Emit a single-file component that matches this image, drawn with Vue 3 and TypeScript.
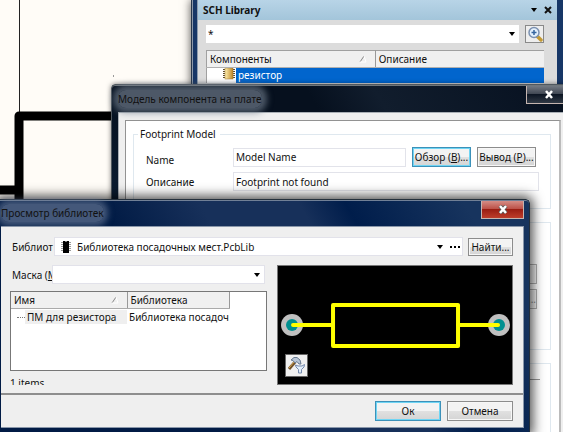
<script setup lang="ts">
import { ref } from 'vue'

interface Row {
  name: string
  library: string
}

const filter = ref('*')
const modelName = ref('Model Name')
const description = ref('Footprint not found')
const library = ref('Библиотека посадочных мест.PcbLib')
const mask = ref('')
const rows: Row[] = [{ name: 'ПМ для резистора', library: 'Библиотека посадоч' }]
</script>

<template>
  <main class="desktop">
    <svg class="sheet" width="120" height="210" aria-hidden="true">
      <path d="M19.5 0V114" stroke="#222" fill="none" />
      <path d="M120 116H19V210M0 190H19" stroke="#000" stroke-width="9" stroke-linejoin="round" fill="none" />
      <rect x="113" y="75" width="1" height="2" fill="#999" />
    </svg>

    <section class="window sch">
      <header class="panel-title">
        <h2>SCH Library</h2>
        <button class="flat" aria-label="Menu"><svg width="8" height="8"><path d="M1 2H7L4 6Z" /></svg></button>
        <button class="flat" aria-label="Close"><svg width="8" height="8"><path d="M1 1L7 7M7 1L1 7" stroke="#111" stroke-width="2" /></svg></button>
      </header>
      <div class="sch-body">
        <div class="sch-search">
          <div class="combo">
            <select v-model="filter" aria-label="Filter"><option>*</option></select>
            <svg class="arrow" width="8" height="8"><path d="M1 2H7L4 6Z" /></svg>
          </div>
          <button class="zoom" aria-label="Zoom">
            <svg width="16" height="16" viewBox="0 0 16 16">
              <path d="M10 10L14 14" stroke="#c39a35" stroke-width="3.5" stroke-linecap="round" />
              <circle cx="7" cy="6.500" r="5" fill="#e4f1fd" stroke="#7b91b1" stroke-width="1.500" />
              <path d="M4.500 6.500H9.500M7 4V9" stroke="#35659f" stroke-width="1.500" />
            </svg>
          </button>
        </div>
        <table class="components">
          <thead>
            <tr>
              <th><div class="head">Компоненты<svg width="8" height="8"><path d="M1 7L5 1" stroke="#888" /><path d="M5 1L7 7H1" stroke="#fff" fill="none" /></svg></div></th>
              <th>Описание</th>
            </tr>
          </thead>
          <tbody>
            <tr>
              <td colspan="2">
                <div class="component">
                  <span class="component-icon">
                    <svg width="12" height="12" viewBox="0 0 12 12">
                      <defs><linearGradient id="gold"><stop stop-color="#fff0b0" /><stop offset="1" stop-color="#bd8526" /></linearGradient></defs>
                      <path d="M0 1.500H12M0 3.500H12M0 5.500H12M0 7.500H12M0 9.500H12" stroke="#5d4b2b" />
                      <rect x="2" y="0" width="8" height="11" fill="url(#gold)" stroke="#a07a32" stroke-width=".5" />
                    </svg>
                  </span>
                  <span class="component-name">резистор</span>
                </div>
              </td>
            </tr>
          </tbody>
        </table>
      </div>
    </section>

    <section class="window model">
      <header class="caption"><h2>Модель компонента на плате</h2></header>
      <button class="close dark" aria-label="Закрыть">
        <svg width="10" height="9" viewBox="0 0 10 9"><path d="M2 1L8 8M8 1L2 8" stroke="#fff" stroke-width="2.500" /></svg>
      </button>
      <div class="model-client">
        <div class="model-page">
          <fieldset class="footprint">
            <legend>Footprint Model</legend>
            <div class="field name-field">
              <label for="model-name">Name</label>
              <input id="model-name" v-model="modelName">
              <button class="btn focus">Обзор (<u>В</u>)...</button>
              <button class="btn">Вывод (<u>Р</u>)...</button>
            </div>
            <div class="field">
              <label for="model-desc">Описание</label>
              <input id="model-desc" v-model="description">
            </div>
          </fieldset>
          <fieldset class="library-group">
            <button class="btn wide" aria-label="Выбрать"></button>
            <button class="btn">...</button>
          </fieldset>
          <fieldset class="selected-group"><hr></fieldset>
        </div>
      </div>
    </section>

    <section class="window browse">
      <header class="caption"><h2>Просмотр библиотек</h2></header>
      <button class="close red" aria-label="Закрыть">
        <svg width="10" height="9" viewBox="0 0 10 9"><path d="M2 1L8 8M8 1L2 8" stroke="#555" stroke-width="4" /><path d="M2 1L8 8M8 1L2 8" stroke="#fff" stroke-width="2.500" /></svg>
      </button>
      <div class="browse-client">
        <div class="browse-main">
          <div class="library-line">
            <label for="library">Библиот</label>
            <div class="combo library-combo">
              <svg class="chip" width="10" height="12" viewBox="0 0 10 12">
                <path d="M0 1.500H10M0 3.500H10M0 5.500H10M0 7.500H10M0 9.500H10" stroke="#999" />
                <path d="M2 0H4L5 1L6 0H8V12H2Z" />
              </svg>
              <select id="library" v-model="library"><option>Библиотека посадочных мест.PcbLib</option></select>
              <svg class="arrow" width="8" height="8"><path d="M1 2H7L4 6Z" /></svg>
              <button class="flat" aria-label="Библиотеки"><svg width="10" height="4"><path d="M0 1H2V3H0ZM4 1H6V3H4ZM8 1H10V3H8Z" /></svg></button>
            </div>
            <button class="btn find">Найти...</button>
          </div>
          <div class="columns">
            <div class="left">
              <div class="mask-line">
                <label for="mask">Маска (<u>М</u></label>
                <div class="combo">
                  <select id="mask" v-model="mask"><option></option></select>
                  <svg class="arrow" width="8" height="8"><path d="M1 2H7L4 6Z" /></svg>
                </div>
              </div>
              <div class="list">
                <table>
                  <thead>
                    <tr>
                      <th><div class="head">Имя<svg width="8" height="8"><path d="M1 7L5 1" stroke="#888" /><path d="M5 1L7 7H1" stroke="#fff" fill="none" /></svg></div></th>
                      <th>Библиотека</th>
                    </tr>
                  </thead>
                  <tbody>
                    <tr v-for="row in rows" :key="row.name">
                      <td><div class="tree"><span>{{ row.name }}</span></div></td>
                      <td>{{ row.library }}</td>
                    </tr>
                  </tbody>
                </table>
              </div>
              <p class="count">{{ rows.length }} items</p>
            </div>
            <div class="preview">
              <svg class="board" viewBox="0 0 234 118" role="img" aria-label="Посадочное место">
                <g fill="#c0c0c0"><circle cx="14" cy="59" r="11" /><circle cx="221" cy="59" r="11" /></g>
                <g fill="#009090"><circle cx="14" cy="59" r="6" /><circle cx="221" cy="59" r="6" /></g>
                <g fill="none" stroke="#ff0" stroke-width="4" stroke-linecap="round" stroke-linejoin="round">
                  <path d="M15 59H55M180 59H220" /><rect x="55" y="39" width="125" height="41" />
                </g>
              </svg>
              <button class="tools" aria-label="Настройка">
                <svg width="19" height="19" viewBox="0 0 19 19">
                  <path d="M2 13L8 6" stroke="#6f5028" stroke-width="3" />
                  <path d="M2 12L7 6" stroke="#d7a957" stroke-width="1" />
                  <path d="M4 4L7 1.500H10L13 4L14 8L12 8L10 5.500L8 7L6 4.500Z" fill="#b9c6d6" stroke="#667991" />
                  <path d="M8.500 9L11 10H15L17.500 8.500L17 11L14.500 13.500V17H11.500V13.500L9 11Z" fill="#e3effa" stroke="#7489ad" />
                </svg>
              </button>
            </div>
          </div>
        </div>
        <footer>
          <button class="btn focus">Ок</button>
          <button class="btn">Отмена</button>
        </footer>
      </div>
    </section>
  </main>
</template>

<style>
body { margin: 0; }
</style>

<style scoped>
* { box-sizing: border-box; }
.desktop {
  position: relative;
  height: 100vh;
  overflow: hidden;
  background: #fffcf7;
  color: #111;
  font: 10px/16px "Noto Sans", "Open Sans", sans-serif;
}
button, input, select { font: inherit; color: inherit; margin: 0; padding: 0; outline: 0; }
h2, p { margin: 0; font-size: 10px; font-weight: 400; }
svg { display: block; flex: none; }
.sheet { position: absolute; left: 0; top: 0; }
.window { position: absolute; }
.flat { border: 0; background: none; }

.sch {
  left: 191px;
  right: -1px;
  top: 0;
  bottom: 0;
  padding: 0 7px;
  background: linear-gradient(90deg, #26364c 0 1px, #8c99aa 1px 2px, #173767 2px 6px, #8e9daf 6px 7px, #173767 7px);
  box-shadow: 0 0 9px rgba(0, 0, 0, .7);
}
.panel-title {
  display: flex;
  align-items: center;
  gap: 6px;
  height: 20px;
  padding: 0 5px;
  background: linear-gradient(#b8d4e7, #a3c5da);
}
.panel-title h2 { flex: 1; font-weight: 700; }
.sch-body { height: 100%; padding: 5px 13px 0 8px; background: #dcdcdc; }
.sch-search { display: flex; gap: 6px; }
.combo { position: relative; display: flex; flex: 1; align-items: center; height: 18px; background: #fff; }
.combo select { flex: 1; width: 100%; min-width: 0; height: 100%; appearance: none; border: 0; background: none; }
.sch .combo select { padding-left: 2px; }
.arrow { position: absolute; right: 3px; pointer-events: none; }
.zoom { display: grid; place-items: center; width: 19px; height: 18px; border: 1px solid #898989; background: #eee; }
table { border-collapse: collapse; border-spacing: 0; table-layout: fixed; }
th, td { padding: 0; text-align: left; font-weight: 400; white-space: nowrap; }
.components { width: 100%; margin-top: 7px; border-top: 1px solid #a0a0a0; border-left: 1px solid #a0a0a0; background: #fff; }
.components th { height: 17px; padding-left: 3px; background: #f0f0f0; border-bottom: 1px solid #b0b0b0; }
.components th + th { border-left: 1px solid #999; }
.head { display: flex; align-items: center; justify-content: space-between; padding-right: 8px; }
.component { display: flex; height: 15px; line-height: 15px; }
.component-icon { display: flex; width: 29px; padding-left: 16px; }
.component-name { flex: 1; padding-left: 2px; background: #0165cd; color: #fff; }

.model {
  left: 111px;
  right: -11px;
  top: 84px;
  bottom: -20px;
  padding: 0 7px 7px 6px;
  border-radius: 4px 0 0 0;
  border: 1px solid #50585f;
  background: linear-gradient(60deg, #0b2038 0 18%, #06101e 32% 60%, #111d2d 70%, #06101f);
  box-shadow: 0 0 5px rgba(0, 0, 0, .5), inset 0 1px #70777c;
}
.caption { display: flex; align-items: center; height: 27px; }
.caption h2 { line-height: 18px; border-radius: 8px; }
.model .caption h2 { background: rgba(115, 127, 143, .65); box-shadow: 0 0 6px 5px rgba(115, 127, 143, .65); }
.close {
  position: absolute;
  top: 1px;
  display: grid;
  place-items: center;
  height: 18px;
  border: 1px solid #c5b5b0;
  border-top: 0;
}
.dark { right: 0; width: 47px; padding-right: 2px; background: linear-gradient(#737982, #424955 45%, #0d1624 50%, #303945); }
.model-client { height: calc(100% - 27px); padding: 7px 4px 0 6px; border: 1px solid #a9afb5; background: #efefef; }
.model-page { height: 100%; padding: 5px 8px 0 7px; border: 1px solid #929292; border-right: 2px solid #bbb; background: #fff; }
fieldset { min-width: 0; margin: 0; border: 1px solid #dfe8ef; }
.footprint { height: 83px; padding: 5px 11px 0 12px; }
legend { margin-left: -8px; padding: 0 4px 0 2px; }
.field { display: flex; align-items: center; }
.field label { flex: 0 0 87px; }
.field input { flex: 1; width: 0; min-width: 0; height: 19px; padding: 0 2px; border: 1px solid #e2e3ea; }
.name-field { margin-bottom: 5px; margin-right: 3px; }
.name-field label { padding-top: 6px; line-height: 14px; }
.btn {
  flex: none;
  height: 20px;
  border: 1px solid #8c8c8c;
  background: linear-gradient(#f3f3f3 0 48%, #e1e1e1 50%, #d4d4d4);
  box-shadow: inset 0 0 0 1px #f7f7f7;
  line-height: 16px;
  white-space: nowrap;
}
.btn.focus { border-color: #3c91b9; box-shadow: inset 0 0 0 1px #6fd5f4; }
.name-field .btn { width: 59px; margin-left: 6px; }
.library-group { display: flex; flex-direction: column; align-items: flex-end; gap: 5px; height: 128px; margin-top: 13px; padding: 41px 13px 0; }
.library-group .btn { width: 60px; text-align: right; background: #f2f2f2; border-color: #b0b0b0; color: #888; }
.selected-group { height: 100px; margin-top: 13px; padding: 15px 10px 0; }
hr { margin: 0; border: 0; border-top: 1px solid #999; }

.browse {
  left: -1px;
  right: 33px;
  top: 199px;
  bottom: -1px;
  display: flex;
  flex-direction: column;
  padding: 0 5px 4px 1px;
  border: 1px solid #24303c;
  border-radius: 0 4px 0 0;
  background: linear-gradient(60deg, #011b45 0 35%, #17305a 50% 65%, #001d4b 72%, #17345e 90%);
  box-shadow: 0 0 12px 3px rgba(0, 0, 0, .7), inset 0 1px #718096;
}
.browse .caption { flex: none; height: 26px; }
.browse .caption h2 { background: rgba(105, 122, 151, .65); box-shadow: 0 0 6px 4px rgba(105, 122, 151, .65); }
.red { right: 5px; width: 43px; background: linear-gradient(#d58d86, #bd5249 45%, #9a1e13 50%, #bd3d2b); }
.browse-client { flex: 1; display: flex; flex-direction: column; min-height: 0; border: 1px solid #8a97aa; border-left: 0; background: #efefef; }
.browse-main { flex: 1; min-height: 0; padding: 10px 10px 0 11px; }
.library-line, .mask-line { display: flex; align-items: center; }
.browse label { flex: none; overflow: hidden; white-space: nowrap; }
.library-line label { width: 42px; }
.mask-line label { width: 40px; margin-left: 2px; }
.browse .combo { border: 1px solid #e2e2ea; height: 19px; }
.library-combo { padding: 0 2px 0 6px; gap: 6px; }
.library-combo .arrow { right: 18px; }
.find { width: 45px; height: 18px; margin-left: 5px; line-height: 14px; }
.columns { display: flex; gap: 10px; margin-top: 9px; }
.left { flex: 258; min-width: 0; margin-left: -2px; }
.mask-line { padding-right: 2px; }
.list { height: 80px; margin-top: 7px; border: 1px solid #777; background: #fff; overflow: hidden; }
.list table { width: 219px; }
.list th { height: 16px; padding-left: 3px; background: #f0f0f0; border-right: 1px solid #999; border-bottom: 1px solid #aaa; }
.list th:first-child { width: 116px; }
.list td + td { padding-left: 2px; }
.tree { display: flex; align-items: center; line-height: 14px; }
.tree::before { content: ""; width: 8px; margin-left: 6px; border-top: 1px dotted #777; }
.tree span { flex: 1; padding-left: 2px; background: #efefef; }
.count { height: 9px; margin-top: 5px; overflow: hidden; line-height: 14px; }
.preview { position: relative; flex: 235; min-width: 0; height: 120px; border: 1px solid #777; background: #000; }
.board { width: 100%; height: 100%; }
.tools { position: absolute; left: 7px; bottom: 7px; display: grid; place-items: center; width: 23px; height: 23px; border: 1px solid #666; background: #f0f0f0; }
footer { display: flex; justify-content: flex-end; gap: 6px; padding: 6px 10px; border-top: 2px solid #8e8e8e; }
footer .btn { width: 66px; }
</style>
